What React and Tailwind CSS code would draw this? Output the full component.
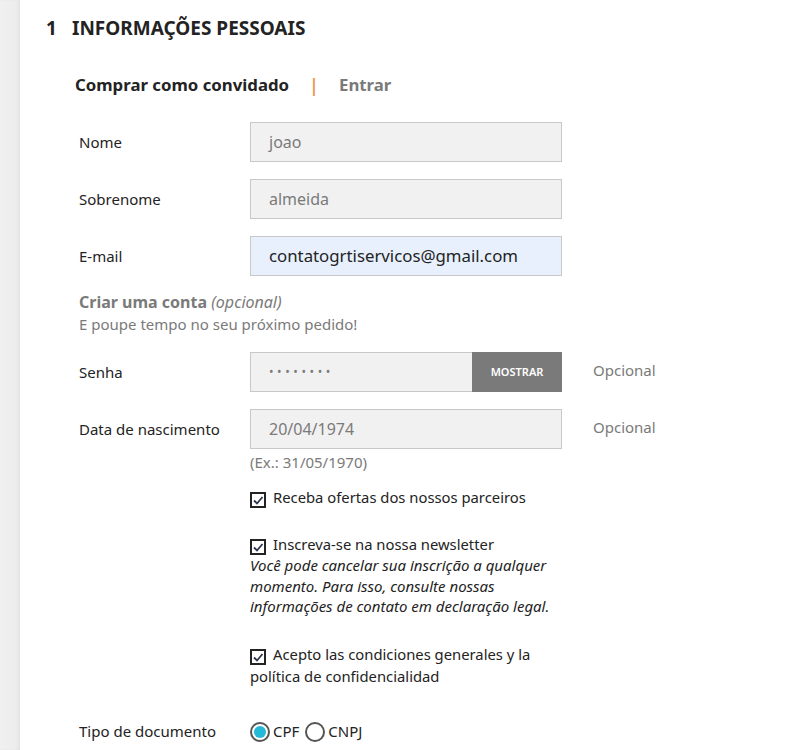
import React from 'react';

const font = { fontFamily: '"Noto Sans", "Open Sans", sans-serif' };

const Field = ({ label, value, filled, children, optional }) => (
    <div className="flex items-center pl-[59px] mb-[17px]">
        <label className="w-[171px] text-[15px] text-[#232323]">{label}</label>
        {children ? children : (
            <div className={`w-[312px] h-[40px] flex items-center pl-[18px] border border-[#c8c8c8] ${filled ? 'bg-[#e8f0fe] text-[#232323] text-[16.8px]' : 'bg-[#f1f1f1] text-[#7a7a7a] text-[16px]'}`}>
                {value}
            </div>
        )}
        {optional && <span className="ml-[31px] -mt-[3px] text-[15px] text-[#7a7a7a]">Opcional</span>}
    </div>
);

const Check = () => (
    <span className="inline-flex items-center justify-center w-[16px] h-[16px] border-2 border-[#232323] align-[-3px] mr-[7px]">
        <svg width="12" height="12" viewBox="0 0 12 12">
            <polyline points="2,6.5 5,9.5 10.5,3" fill="none" stroke="#2a3550" strokeWidth="1.8" />
        </svg>
    </span>
);

const Radio = ({ on }) => (
    <span className="inline-flex items-center justify-center w-[20px] h-[20px] rounded-full border-2 border-[#555] mr-[3px]">
        {on && <span className="w-[12px] h-[12px] rounded-full bg-[#24b9d7]" />}
    </span>
);

export default function App() {
    return (
        <div className="flex min-h-screen" style={font}>
            <div className="w-[20px] bg-gradient-to-r from-[#f0f0f0] to-[#ececec] shadow-[inset_-2px_0_3px_rgba(0,0,0,0.04)]" />
            <div className="flex-1 bg-white">
                <h1 className="mt-[16px] pl-[26px] h-[24px] leading-[24px] text-[19px] font-bold text-[#232323] uppercase">
                    <span className="inline-block w-[26px]">1</span>Informações pessoais
                </h1>

                <div className="mt-[33px] pl-[55px] h-[24px] leading-[24px] text-[16.8px] font-bold flex items-center">
                    <span className="text-[#232323]">Comprar como convidado</span>
                    <span className="mx-[20px] text-[#ec9446] font-semibold text-[18px]">|</span>
                    <span className="text-[#7a7a7a]">Entrar</span>
                </div>

                <div className="mt-[25px]">
                    <Field label="Nome" value="joao" />
                    <Field label="Sobrenome" value="almeida" />
                    <Field label="E-mail" value="contatogrtiservicos@gmail.com" filled />

                    <div className="pl-[59px] leading-[22px] text-[#7a7a7a] -mt-[2px] mb-[17px]">
                        <p className="text-[16px]"><span className="font-bold">Criar uma conta</span> <em>(opcional)</em></p>
                        <p className="text-[15px]">E poupe tempo no seu próximo pedido!</p>
                    </div>

                    <Field label="Senha" optional>
                        <div className="w-[312px] h-[40px] flex">
                            <div className="flex-1 flex items-center pl-[18px] bg-[#f1f1f1] border border-[#c8c8c8] border-r-0 text-[#7a7a7a] text-[12px] tracking-[3.6px]">••••••••</div>
                            <div className="w-[90px] flex items-center justify-center bg-[#7a7a7a] text-white text-[11px] font-semibold">MOSTRAR</div>
                        </div>
                    </Field>

                    <div className="flex items-center pl-[59px]">
                        <label className="w-[171px] text-[15px] text-[#232323]">Data de nascimento</label>
                        <div className="w-[312px] h-[40px] flex items-center pl-[18px] border border-[#c8c8c8] bg-[#f1f1f1] text-[#7a7a7a] text-[16px]">20/04/1974</div>
                        <span className="ml-[31px] -mt-[3px] text-[15px] text-[#7a7a7a]">Opcional</span>
                    </div>
                    <p className="pl-[230px] mt-[3px] text-[15px] leading-[20px] text-[#7a7a7a]">(Ex.: 31/05/1970)</p>

                    <div className="ml-[230px] w-[312px] text-[#232323]">
                        <p className="mt-[14px] text-[14.8px] leading-[22px]"><Check />Receba ofertas dos nossos parceiros</p>
                        <div className="mt-[25px]">
                            <p className="text-[14.8px] leading-[22px]"><Check />Inscreva-se na nossa newsletter</p>
                            <p className="text-[15px] leading-[20.5px] italic">Você pode cancelar sua inscrição a qualquer momento. Para isso, consulte nossas informações de contato em declaração legal.</p>
                        </div>
                        <p className="mt-[26px] text-[14.8px] leading-[22px]"><Check />Acepto las condiciones generales y la política de confidencialidad</p>
                    </div>

                    <div className="flex items-center pl-[59px] mt-[34px] h-[22px]">
                        <label className="w-[171px] text-[15px] text-[#232323]">Tipo de documento</label>
                        <span className="flex items-center text-[15px] text-[#232323]">
                            <Radio on />CPF
                            <span className="ml-[6px] flex items-center"><Radio />CNPJ</span>
                        </span>
                    </div>
                </div>
            </div>
        </div>
    );
}
